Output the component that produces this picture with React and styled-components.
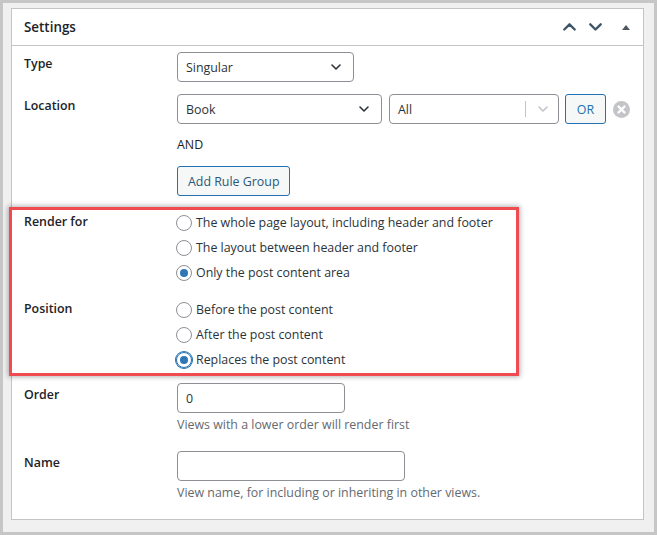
import React from 'react';
import styled, { createGlobalStyle } from 'styled-components';

const FONT = `"Open Sans", "Noto Sans", "Liberation Sans", sans-serif`;
const TEXT = '12.4px';

const GlobalStyle = createGlobalStyle`
  html, body {
    margin: 0;
    padding: 0;
  }
  body {
    font-family: ${FONT};
    background: #f0f0f1;
  }
`;

const Chevron = ({ color = '#2c3338', dir = 'down', size = 10, stroke = 1.6 }) => (
  <svg width={size} height={size * 0.6} viewBox="0 0 10 6" fill="none">
    <path
      d={dir === 'down' ? 'M1 1l4 4 4-4' : 'M1 5l4-4 4 4'}
      stroke={color}
      strokeWidth={stroke}
      strokeLinecap="round"
      strokeLinejoin="round"
    />
  </svg>
);

const RemoveIcon = () => (
  <svg width="17" height="17" viewBox="0 0 17 17">
    <circle cx="8.5" cy="8.5" r="8.5" fill="#c3c4c7" />
    <path d="M5.5 5.5l6 6M11.5 5.5l-6 6" stroke="#fff" strokeWidth="2.4" strokeLinecap="round" />
  </svg>
);

const renderOptions = [
  'The whole page layout, including header and footer',
  'The layout between header and footer',
  'Only the post content area',
];

const positionOptions = [
  'Before the post content',
  'After the post content',
  'Replaces the post content',
];

function App() {
  return (
    <Frame>
      <GlobalStyle />
      <Panel>
        <Header>
          <Title>Settings</Title>
          <HeaderActions>
            <IconButton><Chevron dir="up" size={13} stroke={1.8} color="#3e5468" /></IconButton>
            <IconButton><Chevron dir="down" size={13} stroke={1.8} color="#3e5468" /></IconButton>
            <Toggle />
          </HeaderActions>
        </Header>

        <Body>
          <Row>
            <Label>Type</Label>
            <Field>
              <Select width={177}>
                <span>Singular</span>
                <Chevron />
              </Select>
            </Field>
          </Row>

          <Row space={12}>
            <Label>Location</Label>
            <Field>
              <RuleLine>
                <Select width={205}>
                  <span>Book</span>
                  <Chevron />
                </Select>
                <Select width={170} muted>
                  <span>All</span>
                  <Arrow>
                    <Chevron color="#c3c4c7" />
                  </Arrow>
                </Select>
                <OrButton>OR</OrButton>
                <RemoveIcon />
              </RuleLine>
              <AndText>AND</AndText>
              <Button>Add Rule Group</Button>
            </Field>
          </Row>

          <Highlight>
            <Row>
              <Label>Render for</Label>
              <RadioList>
                {renderOptions.map((text, i) => (
                  <RadioRow key={i}>
                    <Radio checked={i === 2} />
                    {text}
                  </RadioRow>
                ))}
              </RadioList>
            </Row>
            <Row space={12}>
              <Label>Position</Label>
              <RadioList>
                {positionOptions.map((text, i) => (
                  <RadioRow key={i}>
                    <Radio checked={i === 2} focused={i === 2} />
                    {text}
                  </RadioRow>
                ))}
              </RadioList>
            </Row>
          </Highlight>

          <Row space={7}>
            <Label>Order</Label>
            <Field>
              <Input width={168}>0</Input>
              <Hint>Views with a lower order will render first</Hint>
            </Field>
          </Row>

          <Row space={17}>
            <Label>Name</Label>
            <Field>
              <Input width={228} />
              <Hint>View name, for including or inheriting in other views.</Hint>
            </Field>
          </Row>
        </Body>
      </Panel>
    </Frame>
  );
}

const Frame = styled.div`
  box-sizing: border-box;
  width: 657px;
  height: 535px;
  border: 3px solid #c6c6c6;
  background: #f0f0f1;
  padding: 5px 10px 0 8px;
`;

const Panel = styled.div`
  background: #fff;
  border: 1px solid #c3c4c7;
`;

const Header = styled.div`
  height: 36px;
  border-bottom: 1px solid #c3c4c7;
  display: flex;
  align-items: center;
  justify-content: space-between;
  padding: 0 12px;
`;

const Title = styled.h2`
  margin: 0;
  font-size: 13.4px;
  font-weight: 600;
  color: #1d2327;
`;

const HeaderActions = styled.div`
  display: flex;
  align-items: center;
  gap: 13px;
  padding-right: 1px;
`;

const IconButton = styled.span`
  display: flex;
  align-items: center;
  justify-content: center;
  width: 13px;
  height: 13px;
`;

const Toggle = styled.span`
  margin-left: 7px;
  width: 0;
  height: 0;
  border-left: 4px solid transparent;
  border-right: 4px solid transparent;
  border-bottom: 5px solid #50575e;
`;

const Body = styled.div`
  padding: 6px 12px 17px;
`;

const Row = styled.div`
  display: grid;
  grid-template-columns: 153px 1fr;
  margin-top: ${(p) => p.space || 0}px;
`;

const Label = styled.div`
  font-size: ${TEXT};
  font-weight: 600;
  line-height: 20px;
  color: #1d2327;
  padding-top: 2px;
`;

const Field = styled.div`
  display: flex;
  flex-direction: column;
  align-items: flex-start;
`;

const Select = styled.div`
  box-sizing: border-box;
  width: ${(p) => p.width}px;
  height: 30px;
  border: 1px solid #8c8f94;
  border-radius: 4px;
  display: flex;
  align-items: center;
  justify-content: space-between;
  padding: 0 ${(p) => (p.muted ? '0' : '12px')} 0 8px;
  font-size: ${TEXT};
  color: #2c3338;
  background: #fff;
`;

const Arrow = styled.span`
  display: flex;
  align-items: center;
  height: 16px;
  border-left: 1px solid #c3c4c7;
  padding: 0 10px 0 12px;
`;

const RuleLine = styled.div`
  display: flex;
  align-items: center;
  gap: 7px;
`;

const OrButton = styled.div`
  box-sizing: border-box;
  width: 41px;
  height: 30px;
  margin-left: -1px;
  border: 1px solid #2271b1;
  border-radius: 3px;
  background: #f6f7f7;
  color: #2271b1;
  font-size: ${TEXT};
  display: flex;
  align-items: center;
  justify-content: center;
`;

const AndText = styled.div`
  margin-top: 11px;
  font-size: ${TEXT};
  line-height: 20px;
  color: #1d2327;
`;

const Button = styled.div`
  box-sizing: border-box;
  margin-top: 11px;
  height: 30px;
  padding: 0 10px;
  border: 1px solid #2271b1;
  border-radius: 3px;
  background: #f6f7f7;
  color: #2b5877;
  font-size: ${TEXT};
  display: flex;
  align-items: center;
`;

const Highlight = styled.div`
  margin: 11px 0 0 -15px;
  width: 510px;
  box-sizing: border-box;
  border: 3px solid #ef4b50;
  box-shadow: 0 0 5px 1px rgba(0, 0, 0, 0.3);
  padding: 0 0 1px 12px;
  background: #fff;
`;

const RadioList = styled.div`
  display: flex;
  flex-direction: column;
`;

const RadioRow = styled.label`
  display: flex;
  align-items: center;
  gap: 4px;
  height: 25px;
  font-size: ${TEXT};
  color: #2c3338;
  margin-left: -1px;
`;

const Radio = styled.span`
  box-sizing: border-box;
  width: 16px;
  height: 16px;
  border-radius: 50%;
  border: 1px solid ${(p) => (p.focused ? '#2271b1' : '#8c8f94')};
  box-shadow: ${(p) => (p.focused ? '0 0 0 1px #2271b1' : 'none')};
  display: flex;
  align-items: center;
  justify-content: center;
  flex-shrink: 0;
  &::after {
    content: '';
    display: ${(p) => (p.checked ? 'block' : 'none')};
    width: 8px;
    height: 8px;
    border-radius: 50%;
    background: #2f76b5;
  }
`;

const Input = styled.div`
  box-sizing: border-box;
  width: ${(p) => p.width}px;
  height: 30px;
  border: 1px solid #8c8f94;
  border-radius: 4px;
  padding: 0 8px;
  display: flex;
  align-items: center;
  font-size: ${TEXT};
  color: #2c3338;
`;

const Hint = styled.p`
  margin: 3px 0 0;
  font-size: ${TEXT};
  line-height: 18px;
  color: #646970;
`;

export default App;
